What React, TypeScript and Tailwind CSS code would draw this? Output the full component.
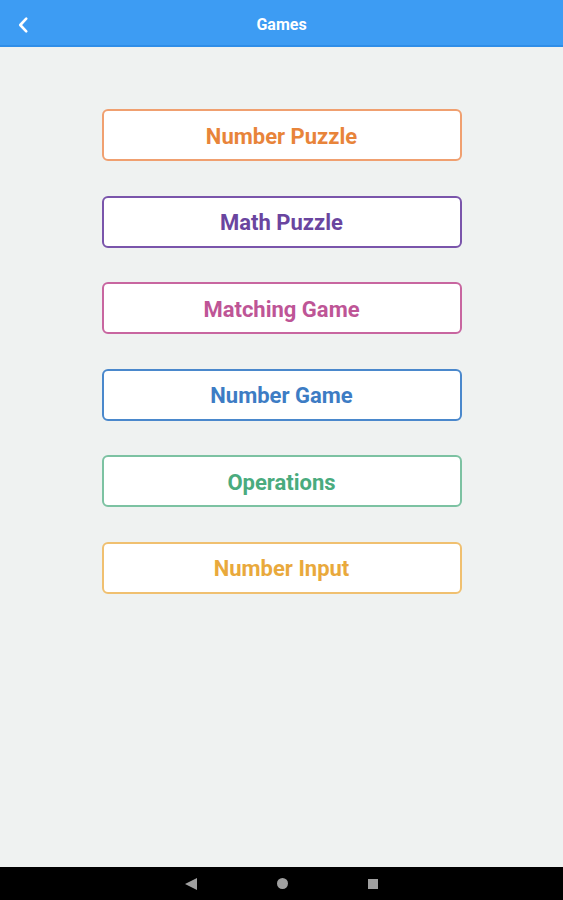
import React from 'react';

const games = [
    { label: 'Number Puzzle', cls: 'border-[#f0a070] text-[#e8843a]' },
    { label: 'Math Puzzle', cls: 'border-[#7a55ab] text-[#6a459f]' },
    { label: 'Matching Game', cls: 'border-[#c866a0] text-[#be5596]' },
    { label: 'Number Game', cls: 'border-[#4a88cc] text-[#3d7cc4]' },
    { label: 'Operations', cls: 'border-[#7cc2a2] text-[#4aab7e]' },
    { label: 'Number Input', cls: 'border-[#f0c070] text-[#e9a93c]' },
];

export default function App() {
    return (
        <div className="flex flex-col h-[900px] w-full bg-[#eff2f1] font-['Roboto',sans-serif]">
            {/* Barra superior */}
            <div className="relative flex items-center justify-center h-[47px] pt-[4px] bg-[#3d9cf3] border-b-2 border-[#2f8ee8] shrink-0">
                <button className="absolute left-[15px] top-[16px] text-white">
                    <svg className="w-[18px] h-[18px]" fill="none" stroke="currentColor" viewBox="0 0 24 24">
                        <path strokeLinecap="round" strokeLinejoin="round" strokeWidth={3.5} d="M15 3.5l-8 8.5 8 8.5" />
                    </svg>
                </button>
                <h1 className="text-white text-[16px] font-bold">Games</h1>
            </div>

            {/* Lista de juegos */}
            <div className="flex-1 flex flex-col items-center pt-[62px] gap-[34.6px]">
                {games.map((g) => (
                    <button
                        key={g.label}
                        className={`w-[360px] h-[52px] pt-[2px] bg-white border-2 rounded-[6px] text-[22px] font-bold ${g.cls}`}
                    >
                        {g.label}
                    </button>
                ))}
            </div>

            {/* Barra de navegación */}
            <div className="flex items-center justify-center gap-[80px] h-[33px] bg-black shrink-0">
                <svg className="w-[12px] h-[12px] text-[#a0a0a0]" viewBox="0 0 12 12" fill="currentColor">
                    <path d="M12 0v12L0 6z" />
                </svg>
                <div className="w-[11px] h-[11px] rounded-full bg-[#a0a0a0]" />
                <div className="w-[10px] h-[10px] bg-[#a0a0a0]" />
            </div>
        </div>
    );
}
